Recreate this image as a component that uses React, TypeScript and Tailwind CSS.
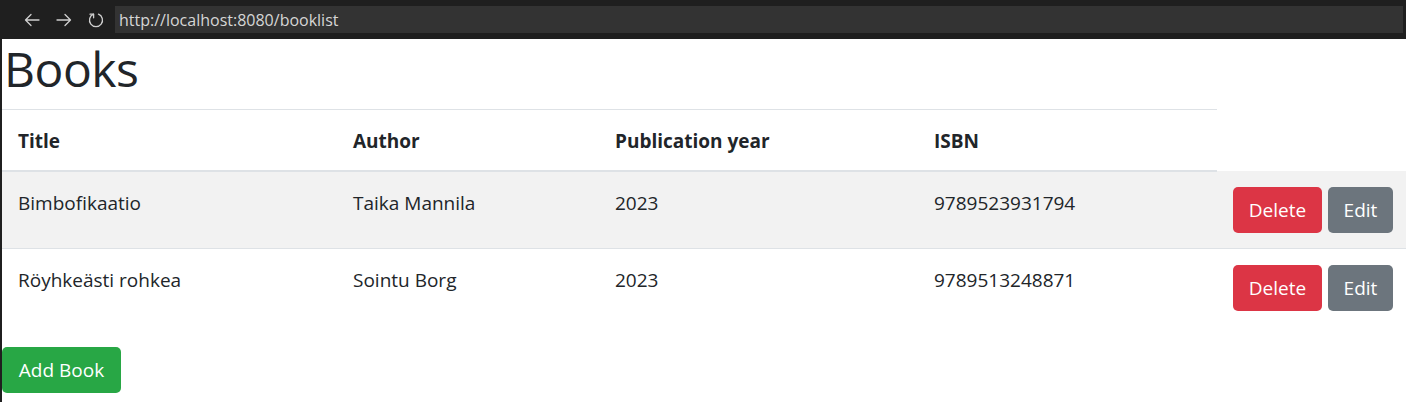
import React from "react";

const books = [
  { title: "Bimbofikaatio", author: "Taika Mannila", year: "2023", isbn: "9789523931794" },
  { title: "Röyhkeästi rohkea", author: "Sointu Borg", year: "2023", isbn: "9789513248871" },
];

function Back() {
  return (
    <svg width="18" height="18" viewBox="0 0 18 18" fill="none" stroke="#cfcfcf" strokeWidth="1.3" strokeLinecap="round" strokeLinejoin="round">
      <path d="M16 9H2.5M8 3.5L2.5 9L8 14.5" />
    </svg>
  );
}
function Fwd() {
  return (
    <svg width="18" height="18" viewBox="0 0 18 18" fill="none" stroke="#cfcfcf" strokeWidth="1.3" strokeLinecap="round" strokeLinejoin="round">
      <path d="M2 9h13.5M10 3.5L15.5 9L10 14.5" />
    </svg>
  );
}
function Reload() {
  return (
    <svg width="18" height="18" viewBox="0 0 18 18" fill="none" stroke="#cfcfcf" strokeWidth="1.3" strokeLinecap="round" strokeLinejoin="round">
      <path d="M6.5 3.2A6.5 6.5 0 1 0 11.5 3.2" />
      <path d="M3 3.2h3.6v3.6" />
    </svg>
  );
}

const th = "text-left font-bold px-[16px] pt-[16px] pb-[14px] border-t border-t-[#dee2e6] border-b-2 border-b-[#dee2e6]";

export default function App() {
  const font = { fontFamily: '"Open Sans", "Noto Sans", sans-serif' };
  return (
    <div className="w-[1406px] h-[402px] overflow-hidden bg-white flex flex-col" style={font}>
      <div className="h-[39px] bg-[#1f1f1f] flex items-center pl-[23px] shrink-0">
        <div className="flex items-center gap-[14px]">
          <Back />
          <Fwd />
          <Reload />
        </div>
        <div className="ml-[10px] mr-[3px] h-[27px] flex-1 bg-[#333333] flex items-center pl-[4px] text-[16px] text-[#d6d6d6]">
          http://localhost:8080/booklist
        </div>
      </div>
      <div className="flex flex-1">
        <div className="w-[2px] bg-[#1f1f1f] shrink-0" />
        <div className="flex-1 text-[#212529]">
          <h1 className="text-[48px] leading-[60px] font-normal m-0 mb-[10px] pl-[2px] tracking-[-0.5px]">Books</h1>
          <table className="w-[1404px] table-fixed border-collapse text-[19px] leading-[30px]">
            <colgroup>
              <col className="w-[335px]" />
              <col className="w-[262px]" />
              <col className="w-[319px]" />
              <col className="w-[299px]" />
              <col className="w-[189px]" />
            </colgroup>
            <thead>
              <tr>
                <th className={th}>Title</th>
                <th className={th}>Author</th>
                <th className={th}>Publication year</th>
                <th className={th}>ISBN</th>
                <th className="p-0" />
              </tr>
            </thead>
            <tbody>
              {books.map((b, i) => {
                const td = `align-top pl-[16px] pr-[16px] pt-[16px] pb-[15px] ${i === 0 ? "border-b border-b-[#dee2e6]" : ""}`;
                return (
                  <tr key={b.isbn} className={i % 2 === 0 ? "bg-[#f2f2f2]" : "bg-white"}>
                    <td className={td}>{b.title}</td>
                    <td className={td}>{b.author}</td>
                    <td className={td}>{b.year}</td>
                    <td className={td}>{b.isbn}</td>
                    <td className={td}>
                      <div className="flex gap-[6px]">
                        <button className="h-[46px] w-[89px] shrink-0 rounded-[5px] bg-[#dc3545] text-white text-[19px]">Delete</button>
                        <button className="h-[46px] w-[65px] shrink-0 rounded-[5px] bg-[#6c757d] text-white text-[19px]">Edit</button>
                      </div>
                    </td>
                  </tr>
                );
              })}
            </tbody>
          </table>
          <div className="mt-[21px]">
            <button className="h-[46px] w-[119px] rounded-[5px] bg-[#28a745] text-white text-[19px]">Add Book</button>
          </div>
        </div>
      </div>
    </div>
  );
}
